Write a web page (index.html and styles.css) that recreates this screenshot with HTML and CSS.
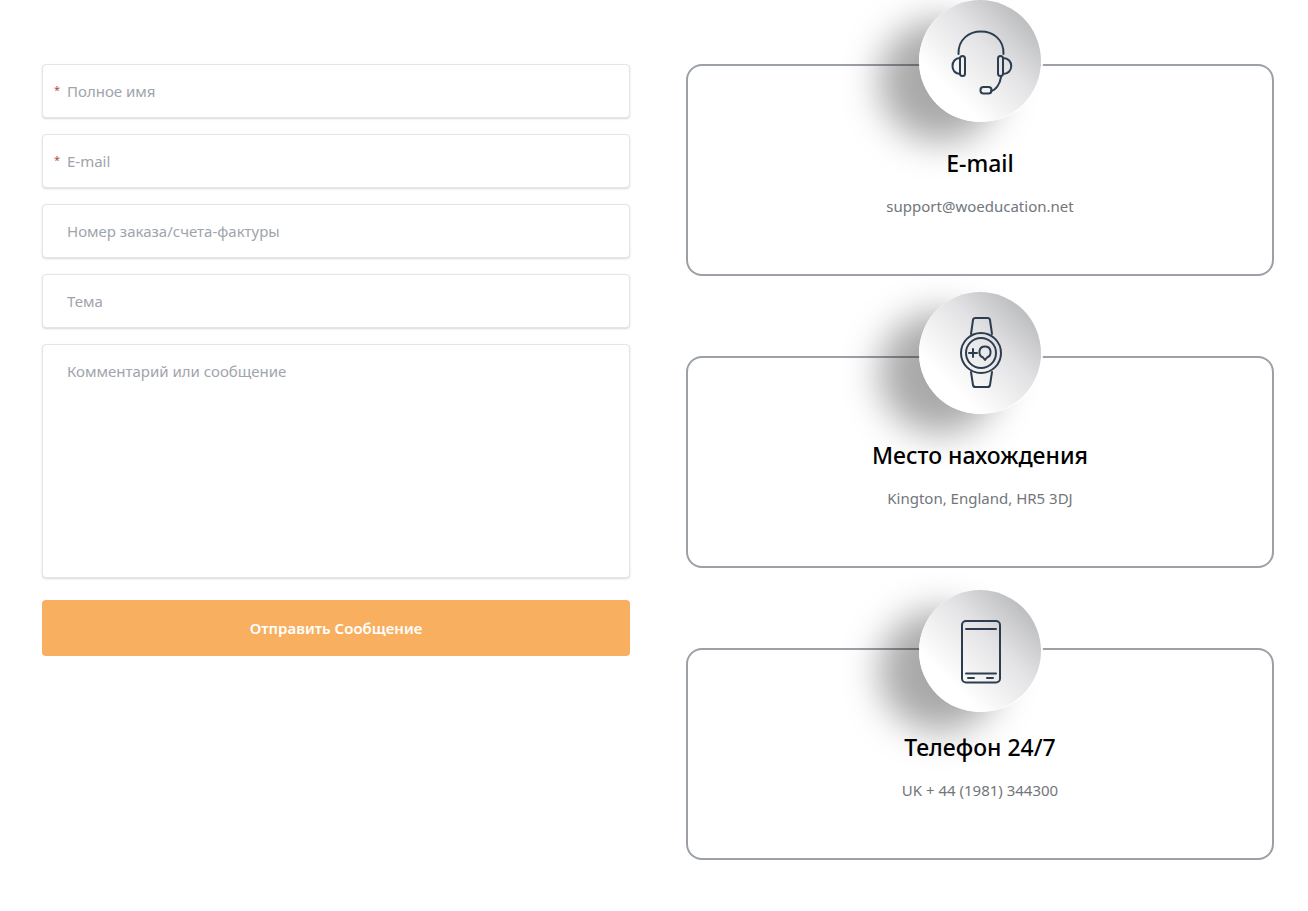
FILE: index.html
```html
<!DOCTYPE html>
<html lang="ru">
<head>
<meta charset="utf-8">
<meta name="viewport" content="width=device-width, initial-scale=1">
<title>Контакты</title>
<link rel="stylesheet" href="styles.css">
</head>
<body>
<main class="contact">
  <form class="form">
    <div class="field">
      <label class="mark" for="name">*</label>
      <input class="control" id="name" type="text" placeholder="Полное имя" aria-label="Полное имя" required>
    </div>
    <div class="field">
      <label class="mark" for="email">*</label>
      <input class="control" id="email" type="email" placeholder="E-mail" aria-label="E-mail" required>
    </div>
    <div class="field">
      <input class="control" type="text" placeholder="Номер заказа/счета-фактуры" aria-label="Номер заказа/счета-фактуры">
    </div>
    <div class="field">
      <input class="control" type="text" placeholder="Тема" aria-label="Тема">
    </div>
    <div class="field">
      <textarea class="control message" placeholder="Комментарий или сообщение" aria-label="Комментарий или сообщение"></textarea>
    </div>
    <button class="submit" type="submit">Отправить Сообщение</button>
  </form>

  <div class="cards">
    <section class="card">
      <div class="badge">
        <svg class="icon" viewBox="0 0 122 122" aria-hidden="true">
          <path d="M39.500 54C38.500 24 85.500 24 84.500 54"/>
          <rect x="41" y="56" width="5" height="20" rx="2.500"/>
          <rect x="79" y="56" width="5" height="20" rx="2.500"/>
          <path d="M41 58C31 58 31 74 41 74M84 58C95 58 95 74 84 74M82 77C81 84 77 90 72 91"/>
          <rect x="61.500" y="87" width="11" height="6.500" rx="3"/>
        </svg>
      </div>
      <h2 class="title">E-mail</h2>
      <p class="detail">support@woeducation.net</p>
    </section>
    <section class="card">
      <div class="badge">
        <svg class="icon" viewBox="0 0 122 122" aria-hidden="true">
          <circle cx="62" cy="61" r="20"/>
          <circle cx="62" cy="61" r="15"/>
          <path d="M52 42L54 28Q54.300 26 56.500 26H68.500Q70.700 26 71 28L73 42M52 80L54 93Q54.300 95 56.500 95H68.500Q70.700 95 71 93L73 80"/>
          <path d="M50 61H58M54 57V65M64 65.500L66 68L68 65.500C73.500 63 72.500 54.500 66 54.500S58.500 63 64 65.500Z"/>
        </svg>
      </div>
      <h2 class="title">Место нахождения</h2>
      <p class="detail">Kington, England, HR5 3DJ</p>
    </section>
    <section class="card card-phone">
      <div class="badge">
        <svg class="icon" viewBox="0 0 122 122" aria-hidden="true">
          <rect x="43" y="31" width="38" height="61.500" rx="4"/>
          <path d="M47 39H77M47 83.500H77M49 88H55M68 88H74"/>
        </svg>
      </div>
      <h2 class="title">Телефон 24/7</h2>
      <p class="detail">UK + 44 (1981) 344300</p>
    </section>
  </div>
</main>
</body>
</html>
```
FILE: styles.css
```css
* {
  box-sizing: border-box;
}

body {
  margin: 0;
  background: #fff;
  color: #72767b;
  font-family: "Noto Sans", "Open Sans", sans-serif;
  font-size: 15px;
  line-height: 24px;
}

.contact {
  display: grid;
  grid-template-columns: 1fr 1fr;
  gap: 56px;
  align-items: start;
  padding: 64px 34px 51px 42px;
}

.form {
  display: flex;
  flex-direction: column;
  gap: 16px;
}

.field {
  position: relative;
  display: flex;
}

.control {
  width: 100%;
  height: 54px;
  padding: 14px 24px;
  border: 1px solid #e5e5e5;
  border-radius: 4px;
  background: #fff;
  box-shadow: 0 1px 2px rgba(0, 0, 0, 0.15);
  color: #333;
  font: inherit;
}

.control::placeholder {
  color: #a0a4ac;
  opacity: 1;
}

.message {
  height: 234px;
  resize: none;
}

.mark {
  position: absolute;
  top: 14px;
  left: 12px;
  color: #b94a48;
  font-size: 11px;
}

.submit {
  height: 56px;
  margin-top: 6px;
  border: 0;
  border-radius: 4px;
  background: #f8af5f;
  color: #fff;
  font: inherit;
  font-weight: 600;
}

.cards {
  display: grid;
  gap: 80px;
}

.card {
  position: relative;
  min-height: 212px;
  padding: 80px 24px 54px;
  border: 2px solid #9ca0a7;
  border-radius: 16px;
  text-align: center;
}

.badge {
  position: absolute;
  top: -66px;
  left: calc(50% - 61px);
  width: 122px;
  height: 122px;
  border-radius: 50%;
  background: linear-gradient(225deg, #b4b5b8 8%, #e2e2e4 40%, #fff 75%);
  box-shadow: 2px 0 0 #fff, -40px 20px 36px rgba(0, 0, 0, 0.34);
}

.card-phone .badge {
  top: -60px;
}

.icon {
  display: block;
  width: 100%;
  fill: none;
  stroke: #2d3d50;
  stroke-width: 2;
  stroke-linecap: round;
  stroke-linejoin: round;
}

.title {
  position: relative;
  margin: 0 0 14px;
  color: #000;
  font-size: 23px;
  font-weight: 500;
  line-height: 34px;
}

.detail {
  margin: 0;
}
```
